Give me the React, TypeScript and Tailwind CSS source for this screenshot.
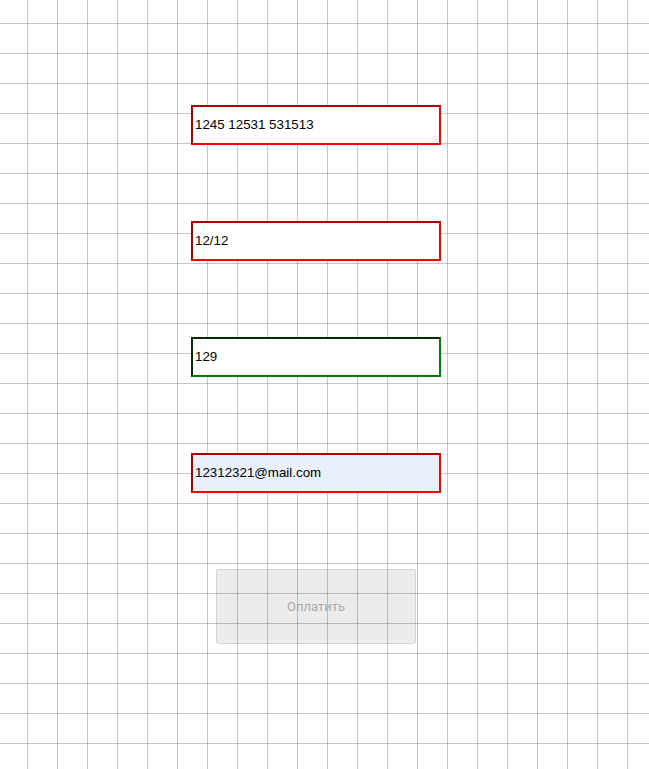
import React from "react";

const fields = [
  { value: "1245 12531 531513", ok: false, filled: false },
  { value: "12/12", ok: false, filled: false },
  { value: "129", ok: true, filled: false },
  { value: "12312321@mail.com", ok: false, filled: true },
];

export default function App() {
  return (
    <div className="min-h-[769px] w-full bg-white bg-[linear-gradient(to_right,rgba(0,0,0,0.22)_1px,transparent_1px),linear-gradient(to_bottom,rgba(0,0,0,0.22)_1px,transparent_1px)] bg-[size:30px_30px] bg-[position:27px_23px] pt-[105px]">
      <div className="ml-[191px] flex w-[250px] flex-col items-center gap-[76px]">
        {fields.map((f) => (
          <input
            key={f.value}
            defaultValue={f.value}
            className={
              "h-[40px] w-[250px] border-2 [border-style:inset] px-[2px] pt-0 pb-[1px] font-['Liberation_Sans',Arial,sans-serif] text-[13.33px] text-black outline-none " +
              (f.ok ? "border-[#008000] " : "border-[#ff0000] ") +
              (f.filled ? "bg-[#e8f0fe]" : "bg-white")
            }
          />
        ))}
        <button
          disabled
          className="h-[75px] w-[200px] rounded-[3px] border border-black/10 bg-black/[0.075] font-['Roboto',sans-serif] text-[13px] text-[#a9a9a9]"
        >
          Оплатить
        </button>
      </div>
    </div>
  );
}
